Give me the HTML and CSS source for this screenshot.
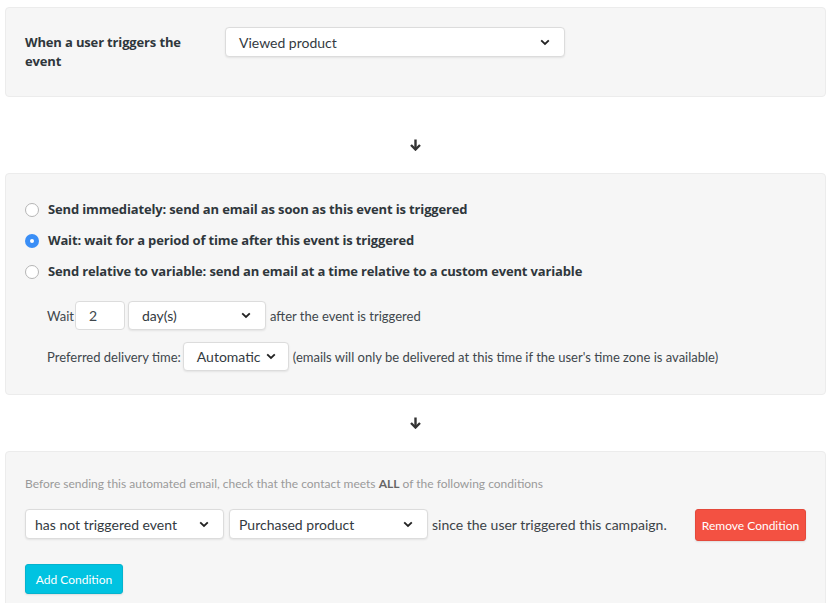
FILE: index.html
```html
<!DOCTYPE html>
<html>
<head>
<meta charset="utf-8">
<link rel="stylesheet" href="styles.css">
</head>
<body>
<div class="page">
  <section class="panel panel-trigger">
    <div class="trigger-label">When a user triggers the event</div>
    <div class="select select-event">
      <span>Viewed product</span>
      <svg class="chev" width="10" height="7" viewBox="0 0 10 7"><path d="M1.2 1.3 L5 5 L8.8 1.3" fill="none" stroke="#222" stroke-width="1.8"/></svg>
    </div>
  </section>

  <div class="arrow arrow-1">
    <svg width="11" height="12" viewBox="0 0 11 12"><path d="M5.5 0.5 V10" stroke="#333" stroke-width="2.4" fill="none"/><path d="M1 6 L5.5 10.5 L10 6" stroke="#333" stroke-width="2.4" fill="none"/></svg>
  </div>

  <section class="panel panel-timing">
    <label class="radio-row"><span class="radio"></span><span>Send immediately: send an email as soon as this event is triggered</span></label>
    <label class="radio-row"><span class="radio checked"></span><span>Wait: wait for a period of time after this event is triggered</span></label>
    <label class="radio-row"><span class="radio"></span><span>Send relative to variable: send an email at a time relative to a custom event variable</span></label>

    <div class="wait-options">
      <div class="opt-row">
        <span>Wait</span>
        <div class="num-input">2</div>
        <div class="select select-unit">
          <span>day(s)</span>
          <svg class="chev" width="10" height="7" viewBox="0 0 10 7"><path d="M1.2 1.3 L5 5 L8.8 1.3" fill="none" stroke="#222" stroke-width="1.8"/></svg>
        </div>
        <span>after the event is triggered</span>
      </div>
      <div class="opt-row">
        <span>Preferred delivery time:</span>
        <div class="select select-time">
          <span>Automatic</span>
          <svg class="chev" width="10" height="7" viewBox="0 0 10 7"><path d="M1.2 1.3 L5 5 L8.8 1.3" fill="none" stroke="#222" stroke-width="1.8"/></svg>
        </div>
        <span>(emails will only be delivered at this time if the user's time zone is available)</span>
      </div>
    </div>
  </section>

  <div class="arrow arrow-2">
    <svg width="11" height="12" viewBox="0 0 11 12"><path d="M5.5 0.5 V10" stroke="#333" stroke-width="2.4" fill="none"/><path d="M1 6 L5.5 10.5 L10 6" stroke="#333" stroke-width="2.4" fill="none"/></svg>
  </div>

  <section class="panel panel-conditions">
    <p class="cond-note">Before sending this automated email, check that the contact meets <b>ALL</b> of the following conditions</p>
    <div class="cond-row">
      <div class="select select-cond">
        <span>has not triggered event</span>
        <svg class="chev" width="10" height="7" viewBox="0 0 10 7"><path d="M1.2 1.3 L5 5 L8.8 1.3" fill="none" stroke="#222" stroke-width="1.8"/></svg>
      </div>
      <div class="select select-cond">
        <span>Purchased product</span>
        <svg class="chev" width="10" height="7" viewBox="0 0 10 7"><path d="M1.2 1.3 L5 5 L8.8 1.3" fill="none" stroke="#222" stroke-width="1.8"/></svg>
      </div>
      <span class="cond-text">since the user triggered this campaign.</span>
      <button class="btn btn-remove">Remove Condition</button>
    </div>
    <button class="btn btn-add">Add Condition</button>
  </section>
</div>
</body>
</html>
```

FILE: styles.css
```css
* { box-sizing: border-box; }
html, body { margin: 0; padding: 0; background: #fff; }
body {
  font-family: Lato, "Open Sans", sans-serif;
  color: #333a3f;
  height: 603px;
  overflow: hidden;
}
.page { padding: 7px 6px 0 5px; }
.panel {
  background: #f6f6f6;
  border: 1px solid #ececec;
  border-radius: 4px;
}
.panel-trigger {
  display: flex;
  align-items: flex-start;
  padding: 19px 20px 25px 19px;
}
.trigger-label {
  width: 200px;
  font-family: "Open Sans", Lato, sans-serif;
  font-size: 13px;
  font-weight: 700;
  letter-spacing: -0.15px;
  line-height: 19px;
  padding: 6px 16px 0 0;
  color: #2f373c;
}
.select {
  display: flex;
  align-items: center;
  justify-content: space-between;
  background: #fff;
  border: 1px solid #dcdcdc;
  border-radius: 4px;
  height: 30px;
  padding: 0 14px 0 13px;
  font-size: 14px;
  color: #333a3f;
  box-shadow: 0 1px 2px rgba(0,0,0,0.08);
}
.select-event { width: 340px; height: 30px; }
.chev { display: block; flex: none; }
.arrow { display: flex; justify-content: center; }
.arrow svg { display: block; }
.arrow-1 { padding: 42px 0 22px; }
.arrow-2 { padding: 22px 0 22px; }
.panel-timing { padding: 26px 20px 23px 19px; }
.radio-row {
  display: flex;
  align-items: center;
  gap: 9px;
  font-family: "Open Sans", Lato, sans-serif;
  font-size: 13px;
  font-weight: 700;
  letter-spacing: -0.15px;
  line-height: 19px;
  color: #2f373c;
  margin-bottom: 12px;
}
.radio {
  width: 14px;
  height: 14px;
  border-radius: 50%;
  border: 1px solid #b5b5b5;
  background: #fff;
  flex: none;
}
.radio.checked {
  border: none;
  background: #3a8ef6;
  display: flex;
  align-items: center;
  justify-content: center;
}
.radio.checked::after {
  content: "";
  width: 4px;
  height: 4px;
  border-radius: 50%;
  background: #fff;
}
.wait-options { padding: 8px 0 0 22px; display: flex; flex-direction: column; gap: 12px; }
.opt-row {
  display: flex;
  align-items: center;
  gap: 4px;
  font-size: 13px;
  color: #40474c;
}
.num-input {
  width: 50px;
  height: 29px;
  margin-left: -3px;
  background: #fff;
  border: 1px solid #dcdcdc;
  border-radius: 4px;
  font-size: 14px;
  padding: 0 0 0 13px;
  display: flex;
  align-items: center;
}
.select-unit { width: 138px; height: 29px; margin-left: -1px; }
.select-time { width: 106px; height: 29px; padding: 0 12px 0 13px; font-size: 14px; margin-left: -2px; }
.panel-conditions { padding: 24px 20px 40px 19px; }
.cond-note {
  margin: 0 0 15px;
  font-size: 12px;
  line-height: 16px;
  color: #9a9a9a;
}
.cond-note b { color: #666; font-weight: 700; }
.cond-row { display: flex; align-items: center; gap: 5px; }
.select-cond { width: 199px; height: 30px; padding: 0 14px 0 9px; }
.cond-text { font-size: 14px; color: #3c4348; margin-left: -1px; }
.btn {
  font-family: inherit;
  border: none;
  border-radius: 3px;
  color: #fff;
  cursor: pointer;
}
.btn-remove {
  margin-left: auto;
  margin-right: -1px;
  margin-top: 2px;
  width: 111px;
  height: 32px;
  background: #f35142;
  border: 1px solid #e4493b;
  font-size: 12px;
  padding: 0;
  box-shadow: 0 1px 2px rgba(0,0,0,0.1);
}
.btn-add {
  margin-top: 23px;
  width: 98px;
  height: 30px;
  background: #00c3e1;
  border: 1px solid #05b3ce;
  font-size: 12px;
  padding: 0;
  box-shadow: 0 1px 2px rgba(0,0,0,0.1);
}
```
